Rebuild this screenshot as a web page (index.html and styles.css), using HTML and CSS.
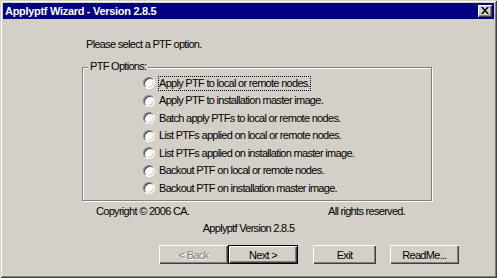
FILE: index.html
```html
<!DOCTYPE html>
<html lang="en">
<head>
    <meta charset="UTF-8">
    <title>Applyptf Wizard - Version 2.8.5</title>
    <link rel="stylesheet" href="styles.css">
</head>
<body>
    <div class="window">
        <div class="titlebar">
            <span class="title">Applyptf Wizard - Version 2.8.5</span>
            <span class="close">
                <svg width="8" height="7" viewBox="0 0 8 7"><path d="M0 0 L2 0 L4 2.5 L6 0 L8 0 L5 3.5 L8 7 L6 7 L4 4.5 L2 7 L0 7 L3 3.5 Z" fill="#000"/></svg>
            </span>
        </div>

        <div class="content">
            <p class="prompt">Please select a PTF option.</p>

            <fieldset class="group">
                <legend>PTF Options:</legend>
                <ul class="options">
                    <li><span class="radio"></span><span class="label focus">Apply PTF to local or remote nodes.</span></li>
                    <li><span class="radio"></span><span class="label">Apply PTF to installation master image.</span></li>
                    <li><span class="radio"></span><span class="label">Batch apply PTFs to local or remote nodes.</span></li>
                    <li><span class="radio"></span><span class="label">List PTFs applied on local or remote nodes.</span></li>
                    <li><span class="radio"></span><span class="label">List PTFs applied on installation master image.</span></li>
                    <li><span class="radio"></span><span class="label">Backout PTF on local or remote nodes.</span></li>
                    <li><span class="radio"></span><span class="label">Backout PTF on installation master image.</span></li>
                </ul>
            </fieldset>

            <div class="copyright">
                <span class="copy-left">Copyright &copy; 2006 CA.</span>
                <span>All rights reserved.</span>
            </div>
            <p class="version">Applyptf Version 2.8.5</p>

            <div class="buttons">
                <button class="btn btn-back" disabled>&lt; Back</button>
                <button class="btn btn-next">Next &gt;</button>
                <button class="btn btn-exit">Exit</button>
                <button class="btn btn-readme">ReadMe...</button>
            </div>
        </div>
    </div>
</body>
</html>
```

FILE: styles.css
```css
body {
    margin: 0;
    font-family: "Liberation Sans", Arial, sans-serif;
    font-size: 11px;
    letter-spacing: -0.7px;
    color: #000;
}

.window {
    width: 497px;
    height: 278px;
    box-sizing: border-box;
    padding: 3px;
    background-color: #d4d0c8;
    box-shadow: inset 1px 1px 0 #d4d0c8, inset -1px -1px 0 #404040,
                inset 2px 2px 0 #fff, inset -2px -2px 0 #808080;
}

.titlebar {
    height: 16px;
    display: flex;
    align-items: center;
    justify-content: space-between;
    padding-left: 2px;
    background-color: #000080;
}

.title {
    color: #fff;
    font-weight: bold;
    letter-spacing: -0.3px;
    line-height: 16px;
}

.close {
    width: 14px;
    height: 12px;
    margin-right: 2px;
    display: flex;
    align-items: center;
    justify-content: center;
    background-color: #d4d0c8;
    box-shadow: inset 1px 1px 0 #fff, inset -1px -1px 0 #404040, inset -2px -2px 0 #808080;
}

.close svg {
    display: block;
    margin: -1px 0 0 -1px;
}

.content {
    display: flex;
    flex-direction: column;
}

.prompt {
    margin: 19px 0 0 83px;
    line-height: 13px;
}

.group {
    width: 350px;
    box-sizing: border-box;
    margin: 8.5px 0 0 79px;
    padding: 0 0 3px 0;
    border: 1px solid #808080;
    box-shadow: inset 1px 1px 0 #fff, 1px 1px 0 #fff;
}

.group legend {
    margin-left: 5px;
    padding: 0 2px 2px 2px;
    line-height: 13px;
    background-color: #d4d0c8;
}

.options {
    list-style: none;
    margin: 0;
    padding: 0 0 0 60px;
}

.options li {
    height: 17.5px;
    display: flex;
    align-items: center;
}

.radio {
    width: 12px;
    height: 12px;
    box-sizing: border-box;
    margin-right: 3px;
    border-radius: 50%;
    border: 1px solid;
    border-color: #808080 #fff #fff #808080;
    background-color: #fff;
    box-shadow: inset 1px 1px 0 #404040, inset -1px -1px 0 #d4d0c8;
    transform: rotate(0deg);
}

.label {
    line-height: 13px;
    border: 1px dotted transparent;
}

.label.focus {
    border-color: #000;
}

.copyright {
    display: flex;
    margin: 4px 0 0 93px;
    line-height: 13px;
}

.copy-left {
    width: 232px;
}

.version {
    margin: 4px 0 0 0;
    line-height: 13px;
    text-align: center;
}

.buttons {
    display: flex;
    margin: 10px 0 0 156px;
}

.btn {
    height: 19px;
    padding: 0;
    font-family: inherit;
    font-size: 11px;
    letter-spacing: -0.7px;
    color: #000;
    background-color: #d4d0c8;
    border: none;
    box-shadow: inset 1px 1px 0 #fff, inset -1px -1px 0 #404040, inset -2px -2px 0 #808080;
}

.btn-back {
    width: 69px;
    color: #808080;
    text-shadow: 1px 1px 0 #fff;
}

.btn-next {
    width: 70px;
    border: 1px solid #000;
}

.btn-exit {
    width: 63px;
    margin-left: 15px;
}

.btn-readme {
    width: 69px;
    margin-left: 14px;
}
```
